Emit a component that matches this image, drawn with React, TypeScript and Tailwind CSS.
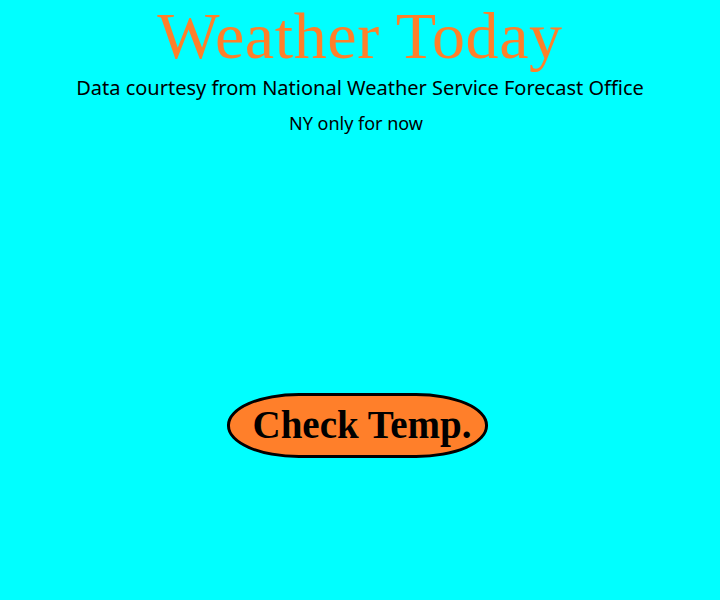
export default function App() {
  return (
    <div className="min-h-[600px] bg-[#00ffff] flex flex-col items-center text-center">
      <h1 className="-mt-[1px] text-[66px] leading-[74px] tracking-[0.6px] text-[#ff7f2a] font-['Liberation_Serif',serif]">
        Weather Today
      </h1>
      <p className="mt-[1px] text-[20px] leading-[28px] text-black font-['Noto_Sans',sans-serif]">
        Data courtesy from National Weather Service Forecast Office
      </p>
      <p className="mt-[9px] mr-[8px] text-[18px] leading-[24px] text-black font-['Noto_Sans',sans-serif]">
        NY only for now
      </p>
      <button className="mt-[258px] mr-[6px] w-[261px] h-[65px] pl-[23px] pb-[8px] text-left rounded-[72px/32px] border-[3px] border-black bg-[#ff7f2a] text-[39px] font-bold text-black font-['Liberation_Serif',serif]">
        Check Temp.
      </button>
    </div>
  );
}
